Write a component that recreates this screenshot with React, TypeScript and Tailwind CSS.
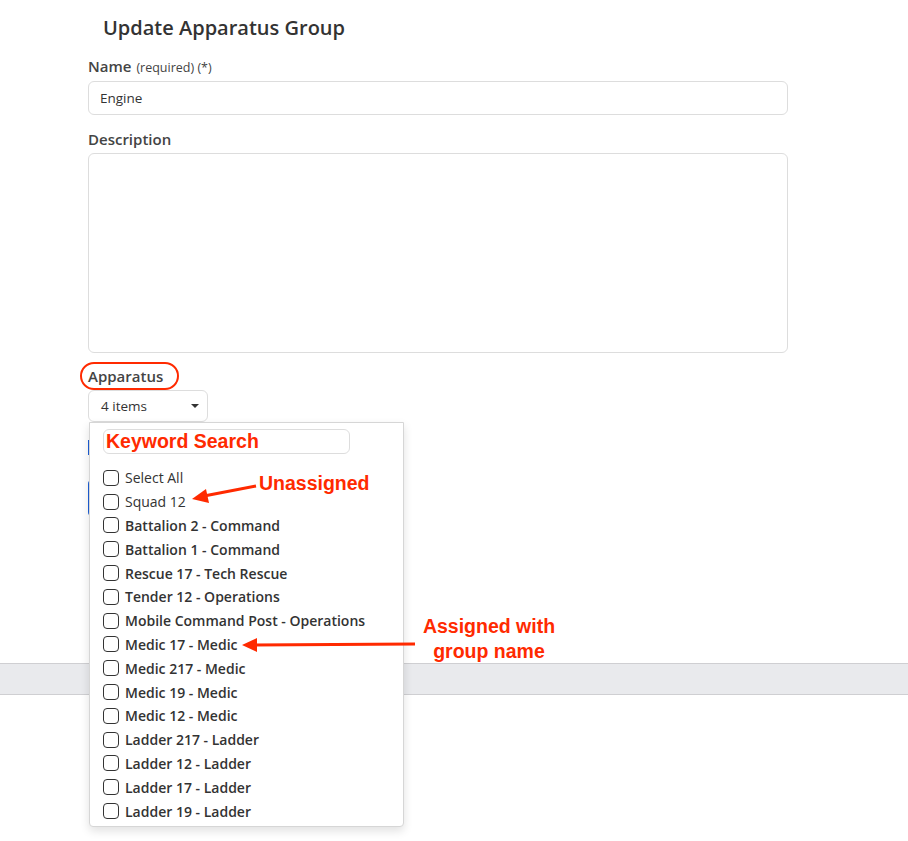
import React from "react";

const items = [
  "Battalion 2 - Command",
  "Battalion 1 - Command",
  "Rescue 17 - Tech Rescue",
  "Tender 12 - Operations",
  "Mobile Command Post - Operations",
  "Medic 17 - Medic",
  "Medic 217 - Medic",
  "Medic 19 - Medic",
  "Medic 12 - Medic",
  "Ladder 217 - Ladder",
  "Ladder 12 - Ladder",
  "Ladder 17 - Ladder",
  "Ladder 19 - Ladder",
];

function Box() {
  return <span className="block w-[16px] h-[16px] shrink-0 rounded-[4px] border-[1.5px] border-[#333]" />;
}

export default function App() {
  return (
    <div className="relative w-full min-h-[841px] bg-white overflow-hidden text-[#333]" style={{ fontFamily: '"Open Sans", "Noto Sans", sans-serif' }}>
      <div className="pl-[88px] w-[788px]">
        <h1 className="mt-[14px] h-[28px] leading-[28px] pl-[15px] text-[20px] font-semibold text-[#333]">Update Apparatus Group</h1>
        <div className="mt-[14px] h-[20px] leading-[20px] flex items-baseline gap-[5px]">
          <span className="text-[15px] font-semibold text-[#444]">Name</span>
          <span className="text-[12.5px] text-[#444]">(required) (*)</span>
        </div>
        <div className="mt-[5px] h-[34px] rounded-[6px] border border-[#ddd] flex items-center px-[11px] text-[13.5px]">Engine</div>
        <div className="mt-[14px] h-[20px] leading-[20px] text-[15px] font-semibold text-[#444]">Description</div>
        <div className="mt-[4px] h-[200px] rounded-[6px] border border-[#ddd]" />
        <div className="mt-[13px] h-[20px] leading-[20px] text-[15px] font-semibold text-[#444]">Apparatus</div>
        <div className="mt-[4px] h-[32px] w-[120px] rounded-[6px] border border-[#ddd] flex items-center justify-between pl-[12px] pr-[8px] text-[13.5px]">
          <span>4 items</span>
          <span className="w-0 h-0 border-l-[4px] border-r-[4px] border-t-[4px] border-l-transparent border-r-transparent border-t-[#333]" />
        </div>
        <div className="mt-[18px] h-[15px] w-[80px] bg-[#1d5fd6]" />
        <div className="mt-[25px] h-[36px] w-[80px] rounded-[4px] bg-[#1d5fd6]" />
      </div>
      <div className="mt-[147px] h-[32px] bg-[#e9eaed] border-t border-b border-[#cfcfd2]" />

      {/* dropdown menu */}
      <div className="absolute left-[89px] top-[422px] w-[315px] h-[405px] bg-white border border-[#d6d6d6] rounded-b-[4px] shadow-[0_4px_10px_rgba(0,0,0,0.12)] overflow-hidden">
        <div className="ml-[13px] mt-[6px] w-[247px] h-[25px] rounded-[6px] border border-[#ddd] flex items-center pl-[2px] text-[19.5px] font-bold text-[#ff2a00] leading-none" style={{ fontFamily: '"Liberation Sans", Arial, sans-serif' }}>
          Keyword Search
        </div>
        <div className="mt-[12px] pl-[13px] flex flex-col">
          <div className="h-[23.8px] flex items-center gap-[6px] text-[14px] text-[#333]"><Box />Select All</div>
          <div className="h-[23.8px] flex items-center gap-[6px] text-[14px] text-[#333]"><Box />Squad 12</div>
          {items.map((t) => (
            <div key={t} className="h-[23.8px] flex items-center gap-[6px] text-[14px] font-semibold text-[#333]"><Box />{t}</div>
          ))}
          <div className="h-[23.8px] flex items-center"><Box /></div>
        </div>
      </div>

      {/* annotations */}
      <div className="absolute left-[80px] top-[362px] w-[99px] h-[28px] rounded-[14px] border-[2.5px] border-[#ff2a00]" />
      <div className="absolute left-[259px] top-[472px] text-[19.5px] font-bold text-[#ff2a00] leading-[22px]" style={{ fontFamily: '"Liberation Sans", Arial, sans-serif' }}>Unassigned</div>
      <div className="absolute left-[405px] top-[614px] w-[168px] text-center text-[19.5px] font-bold text-[#ff2a00] leading-[25px]" style={{ fontFamily: '"Liberation Sans", Arial, sans-serif' }}>
        Assigned with<br />group name
      </div>
      <svg className="absolute left-0 top-0 pointer-events-none" width="908" height="841" viewBox="0 0 908 841">
        <line x1="256" y1="486" x2="204" y2="496" stroke="#ff2a00" strokeWidth="3" />
        <polygon points="192,499 206,489 209,503" fill="#ff2a00" />
        <line x1="415" y1="644" x2="254" y2="645" stroke="#ff2a00" strokeWidth="3" />
        <polygon points="242,645 257,638 257,652" fill="#ff2a00" />
      </svg>
    </div>
  );
}
